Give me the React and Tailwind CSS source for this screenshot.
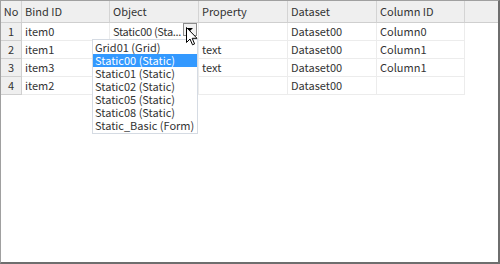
const cols = [
  { key: 'bind', label: 'Bind ID', w: 'w-[88px]' },
  { key: 'object', label: 'Object', w: 'w-[89px]' },
  { key: 'property', label: 'Property', w: 'w-[89px]' },
  { key: 'dataset', label: 'Dataset', w: 'w-[89px]' },
  { key: 'column', label: 'Column ID', w: 'w-[88px]' },
];

const rows = [
  { no: 1, bind: 'item0', object: 'Static00 (Sta...', property: '', dataset: 'Dataset00', column: 'Column0' },
  { no: 2, bind: 'item1', object: '', property: 'text', dataset: 'Dataset00', column: 'Column1' },
  { no: 3, bind: 'item3', object: '', property: 'text', dataset: 'Dataset00', column: 'Column1' },
  { no: 4, bind: 'item2', object: '', property: '', dataset: 'Dataset00', column: '' },
];

const options = [
  'Grid01 (Grid)',
  'Static00 (Static)',
  'Static01 (Static)',
  'Static02 (Static)',
  'Static05 (Static)',
  'Static08 (Static)',
  'Static_Basic (Form)',
];

function Cursor() {
  return (
    <svg width="12" height="19" viewBox="0 0 12 19" className="absolute left-[185px] top-[26px]">
      <path d="M0.5 0.5 L0.5 15.5 L4 12 L6.5 17.8 L8.6 16.9 L6.2 11.3 L11 11.3 Z" fill="#fff" stroke="#000" strokeWidth="1" strokeLinejoin="round" />
    </svg>
  );
}

export default function App() {
  return (
    <div className="w-[500px] h-[264px] bg-white text-[#333] text-[11px] leading-none" style={{ fontFamily: '"Noto Sans CJK KR", "Noto Sans", sans-serif' }}>
      <div className="relative w-[500px] h-[264px] border-l border-t border-[#a0a0a0] border-r-2 border-b-2 border-r-[#6e6e6e] border-b-[#6e6e6e] overflow-hidden">
        {/* header */}
        <div className="flex h-[22px] bg-[#efefef] border-b border-[#cfcfcf]">
          <div className="w-[21px] shrink-0 border-r border-[#d4d4d4] flex items-center justify-center">No</div>
          {cols.map((c) => (
            <div key={c.key} className={`${c.w} shrink-0 border-r border-[#d4d4d4] flex items-center pl-[3px]`}>{c.label}</div>
          ))}
          <div className="flex-1" />
        </div>

        {/* rows */}
        {rows.map((r) => (
          <div key={r.no} className="flex h-[18px]">
            <div className="w-[21px] shrink-0 bg-[#efefef] border-r border-b border-[#d0d0d0] flex items-center justify-center">{r.no}</div>
            {cols.map((c) => (
              <div key={c.key} className={`${c.w} shrink-0 border-r border-b border-[#ececec] flex items-center pl-[3px] relative whitespace-nowrap`}>
                {r.no === 1 && c.key === 'object' ? (
                  <>
                    <span className="tracking-[-0.3px]">{r[c.key]}</span>
                    <div className="absolute left-[73px] top-0 w-[14px] h-[13px] border border-[#8c8c8c] bg-[#f2f2f2] flex items-center justify-center">
                      <div className="w-0 h-0 border-l-[3px] border-r-[3px] border-t-[3px] border-l-transparent border-r-transparent border-t-black" />
                    </div>
                  </>
                ) : (
                  r[c.key]
                )}
              </div>
            ))}
          </div>
        ))}

        {/* dropdown list */}
        <div className="absolute left-[91px] top-[38px] w-[106px] bg-white border border-[#d5dbe3] py-px">
          {options.map((o) => (
            <div key={o} className={`h-[13px] flex items-center pl-[2px] whitespace-nowrap ${o === 'Static00 (Static)' ? 'bg-[#3399ff] text-white' : ''}`}>{o}</div>
          ))}
        </div>

        <Cursor />
      </div>
    </div>
  );
}
